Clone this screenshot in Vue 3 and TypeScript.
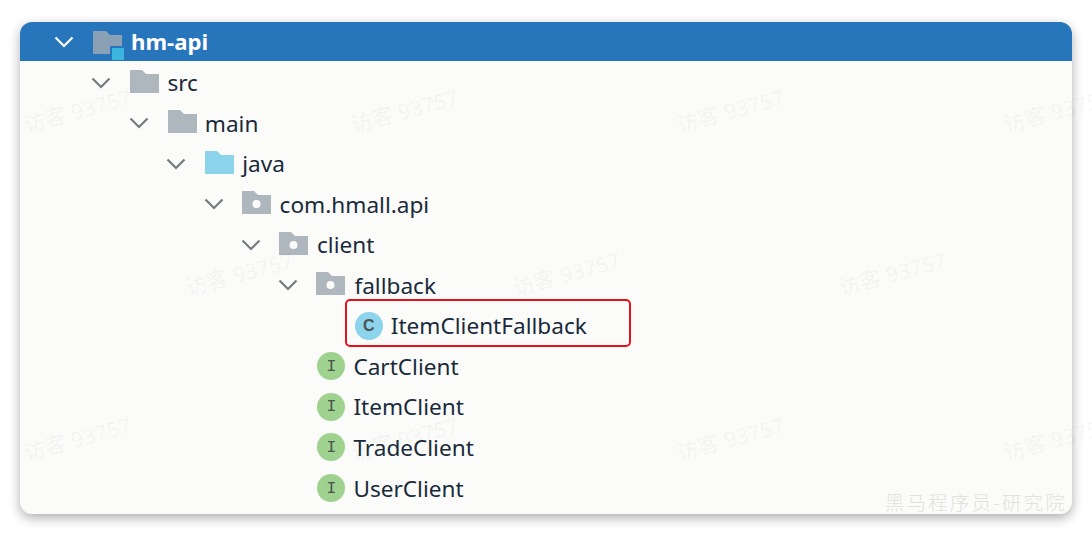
<template>
  <div class="page">
    <section class="tree">
      <div
        v-for="row in rows"
        :key="row.label"
        class="row"
        :class="{ 'row-root': row.kind === 'module' }"
        :style="{ paddingLeft: 31 + row.depth * 37.4 + 'px' }"
      >
        <span class="arrow">
          <svg v-if="row.open" width="20" height="12" viewBox="0 0 20 12">
            <path d="M1.5 1.5 L10 10 L18.5 1.5" fill="none" stroke="currentColor" stroke-width="2.2" />
          </svg>
        </span>
        <span class="entry" :class="{ marked: row.marked }">
          <svg v-if="row.kind === 'module'" class="icon" width="32" height="30" viewBox="0 0 32 30">
            <path d="M0 1 H13 L17 5 H29 V24 H0 Z" fill="#8aa0b4" />
            <rect x="17" y="16" width="15" height="14" fill="#2775bb" />
            <rect x="19" y="18" width="12" height="12" fill="#3cb4e0" />
          </svg>
          <svg v-else-if="row.kind === 'folder' || row.kind === 'source'" class="icon" width="29" height="24" viewBox="0 0 29 24">
            <path d="M0 0 H12 L16 4 H29 V23 H0 Z" :fill="row.kind === 'source' ? '#8cd3ec' : '#aeb7bd'" />
          </svg>
          <svg v-else-if="row.kind === 'package'" class="icon icon-package" width="29" height="24" viewBox="0 0 29 24">
            <path d="M0 0 H12 L16 4 H29 V23 H0 Z" fill="#aeb7bd" />
            <circle cx="14.5" cy="13" r="4" fill="#fbfcfa" />
          </svg>
          <span v-else class="badge" :class="row.kind === 'class' ? 'badge-class' : 'badge-iface'">
            {{ row.kind === 'class' ? 'C' : 'I' }}
          </span>
          <span class="label">{{ row.label }}</span>
        </span>
      </div>
      <span class="credit">黑马程序员-研究院</span>
    </section>

    <span
      v-for="(mark, i) in marks"
      :key="i"
      class="mark"
      :style="{ left: mark[0] + 'px', top: mark[1] + 'px' }"
    >访客 93757</span>
  </div>
</template>

<script setup lang="ts">
type Row = {
  label: string
  depth: number
  kind: 'module' | 'folder' | 'source' | 'package' | 'class' | 'iface'
  open?: boolean
  marked?: boolean
}

const rows: Row[] = [
  { label: 'hm-api', depth: 0, kind: 'module', open: true },
  { label: 'src', depth: 1, kind: 'folder', open: true },
  { label: 'main', depth: 2, kind: 'folder', open: true },
  { label: 'java', depth: 3, kind: 'source', open: true },
  { label: 'com.hmall.api', depth: 4, kind: 'package', open: true },
  { label: 'client', depth: 5, kind: 'package', open: true },
  { label: 'fallback', depth: 6, kind: 'package', open: true },
  { label: 'ItemClientFallback', depth: 7, kind: 'class', marked: true },
  { label: 'CartClient', depth: 6, kind: 'iface' },
  { label: 'ItemClient', depth: 6, kind: 'iface' },
  { label: 'TradeClient', depth: 6, kind: 'iface' },
  { label: 'UserClient', depth: 6, kind: 'iface' },
]

// watermark spots on the page
const marks: [number, number][] = [
  [22, 94], [349, 94], [675, 94], [1002, 94],
  [184, 257], [511, 257], [837, 257],
  [22, 422], [349, 422], [675, 422], [1002, 422],
]
</script>

<style scoped>
.page {
  position: relative;
  width: 1092px;
  height: 535px;
  padding: 22px 20px 21px;
  box-sizing: border-box;
  background: #fff;
  overflow: hidden;
}
.tree {
  position: relative;
  height: 492px;
  background: #fbfcfa;
  border-radius: 12px;
  box-shadow: 0 4px 12px rgba(0, 0, 0, 0.32);
  overflow: hidden;
  font-family: 'Noto Sans', sans-serif;
  color: #1a2a3a;
}
.row {
  display: flex;
  align-items: center;
  height: 40.55px;
  font-size: 22.6px;
}
.row-root {
  height: 39px;
  margin-bottom: 1.3px;
  background: #2775bb;
  color: #fff;
  font-size: 22.2px;
  font-weight: 700;
}
.row-root .label {
  margin-top: -1px;
}
.arrow {
  display: flex;
  justify-content: center;
  width: 26px;
  margin-right: 16px;
  color: #757b7f;
}
.row-root .arrow {
  color: #fff;
}
.entry {
  display: flex;
  align-items: center;
  gap: 8px;
  position: relative;
}
.entry.marked::after {
  content: '';
  position: absolute;
  left: -10px;
  right: -44px;
  top: -11px;
  bottom: -6px;
  border: 2.5px solid #e6101c;
  border-radius: 5px;
}
.icon {
  display: block;
  flex: none;
  margin-top: -2px;
}
.icon-package {
  margin-left: -1px;
  margin-right: 1px;
}
.row-root .icon {
  margin-top: 6px;
  margin-right: -2px;
}
.badge {
  display: flex;
  align-items: center;
  justify-content: center;
  width: 28px;
  height: 28px;
  border-radius: 50%;
  flex: none;
  color: #4a5550;
}
.badge-class {
  background: #8cd3ec;
  font-family: 'Liberation Sans', sans-serif;
  font-size: 16px;
  font-weight: 700;
}
.badge-iface {
  background: #9fd18f;
  font-family: 'Liberation Mono', monospace;
  font-size: 17px;
}
.mark {
  position: absolute;
  font-family: 'Noto Sans', 'Noto Sans CJK SC', sans-serif;
  font-size: 21.5px;
  white-space: nowrap;
  color: rgba(0, 0, 0, 0.05);
  transform: rotate(-15deg);
  pointer-events: none;
}
.credit {
  position: absolute;
  right: 5px;
  bottom: 1px;
  font-family: 'Noto Sans CJK SC', sans-serif;
  font-weight: 300;
  font-size: 19.5px;
  line-height: 22px;
  letter-spacing: 2.2px;
  color: #e0e1dd;
  white-space: nowrap;
}
</style>
